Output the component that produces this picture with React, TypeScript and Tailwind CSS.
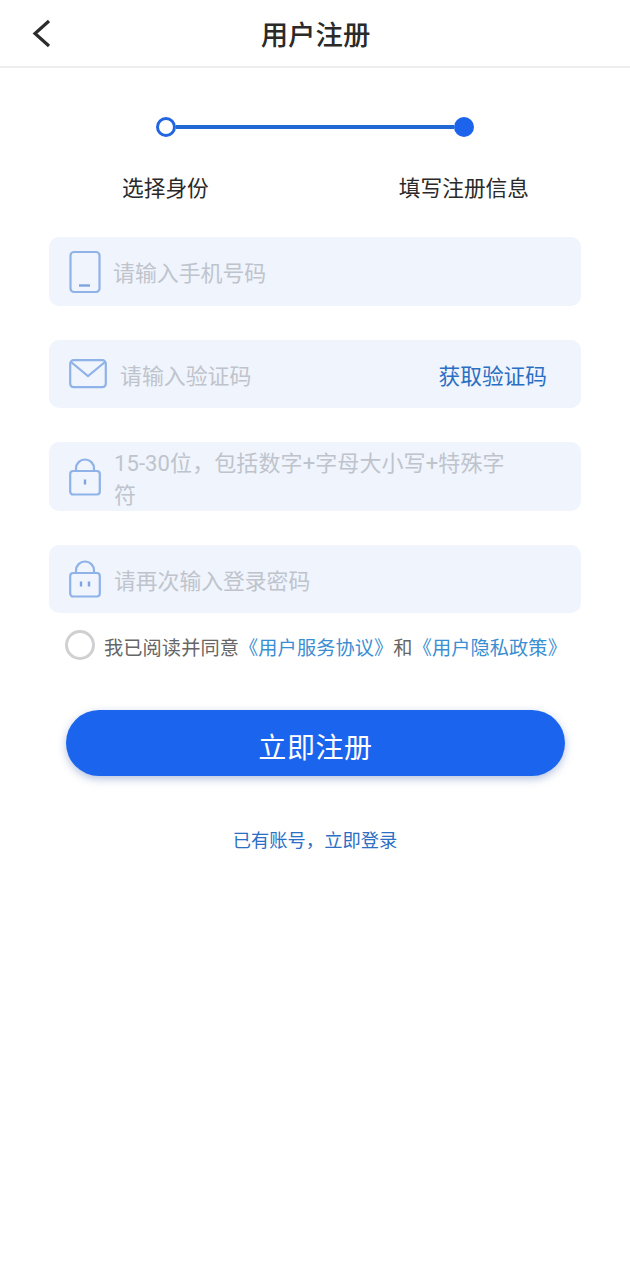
import React from 'react';

const cjk = "font-['Roboto','Noto_Sans_CJK_SC',sans-serif]";

const PhoneIcon = () => (
  <svg width="32" height="44" viewBox="0 0 32 44" fill="none" stroke="#8fb2e8" strokeWidth="2.2">
    <rect x="1.5" y="2" width="29" height="40" rx="3.5" />
    <path d="M10 35.5h11" stroke="#7fa5e0" strokeWidth="2.4" />
  </svg>
);

const MailIcon = () => (
  <svg width="38" height="30" viewBox="0 0 38 30" fill="none" stroke="#8fb2e8" strokeWidth="2.2">
    <rect x="1.2" y="1.2" width="35.6" height="27" rx="3.5" />
    <path d="M2 3l17 14L36 3" />
  </svg>
);

const LockIcon = ({ dots }: { dots: number }) => (
  <svg width="32" height="38" viewBox="0 0 32 38" fill="none" stroke="#8fb2e8" strokeWidth="2.2">
    <rect x="1.2" y="13" width="29.6" height="23.5" rx="3" />
    <path d="M7 13V10.5a9 9 0 0 1 18 0V13" />
    {dots === 1 ? (
      <path d="M16 21.5v5" strokeWidth="2.4" stroke="#7fa5e0" />
    ) : (
      <path d="M12 21.5v5M20 21.5v5" strokeWidth="2.4" stroke="#7fa5e0" />
    )}
  </svg>
);

const App = () => {
  return (
    <div className={`w-[630px] h-[1280px] bg-white overflow-hidden ${cjk}`}>
      {/* header */}
      <div className="relative h-[68px] border-b-2 border-[#eeeeee] flex items-center justify-center">
        <svg className="absolute left-[32px] top-[19px]" width="20" height="29" viewBox="0 0 20 29" fill="none" stroke="#2c2c2c" strokeWidth="3.2">
          <path d="M17 2L3 14.5 17 27" />
        </svg>
        <h1 className="pt-[7px] pl-[1px] text-[27.4px] leading-none font-medium text-[#2a2a2a]">用户注册</h1>
      </div>

      {/* steps */}
      <div className="flex items-center justify-center mt-[48px] h-[21px] pr-[1px]">
        <div className="w-[20px] h-[20px] rounded-full border-[3.5px] border-[#2165e0] bg-white" />
        <div className="w-[278px] h-[4px] bg-[#2068d4]" />
        <div className="w-[20px] h-[20px] rounded-full bg-[#1c64ec]" />
      </div>
      <div className="flex justify-between pl-[122px] pr-[101px] mt-[40px] text-[21.7px] leading-[24px] text-[#2a2a2a]">
        <span>选择身份</span>
        <span>填写注册信息</span>
      </div>

      {/* form */}
      <div className="flex flex-col gap-[34px] mx-[49px] mt-[36px]">
        <div className="h-[69px] rounded-[10px] bg-[#eff4fd] flex items-center pl-[20px] gap-[12px]">
          <PhoneIcon />
          <span className="text-[21.9px] mt-[6px] text-[#bfc4cc]">请输入手机号码</span>
        </div>
        <div className="h-[68px] rounded-[10px] bg-[#eff4fd] flex items-center pl-[20px] pr-[34px]">
          <MailIcon />
          <span className="text-[21.9px] text-[#bfc4cc] ml-[13px] mt-[7px]">请输入验证码</span>
          <span className="ml-auto mt-[6px] text-[21.7px] text-[#2b6fc4]">获取验证码</span>
        </div>
        <div className="h-[69px] rounded-[10px] bg-[#eff4fd] flex items-center pl-[20px] gap-[13px]">
          <LockIcon dots={1} />
          <p className="w-[400px] mt-[6px] text-[22px] leading-[32px] tracking-[0.1px] text-[#bfc4cc]">15-30位，包括数字+字母大小写+特殊字符</p>
        </div>
        <div className="h-[68px] rounded-[10px] bg-[#eff4fd] flex items-center pl-[20px] gap-[13px]">
          <LockIcon dots={2} />
          <span className="text-[21.8px] text-[#bfc4cc] mt-[6px]">请再次输入登录密码</span>
        </div>
      </div>

      {/* agreement */}
      <div className="flex items-center ml-[65px] mt-[17px] h-[30px] text-[19.2px] leading-[30px] tracking-[0.1px] whitespace-nowrap">
        <div className="w-[30px] h-[30px] rounded-full border-[3px] border-[#d0d0d3] bg-white mr-[9px]" />
        <div className="flex mt-[8px]">
          <span className="text-[#666666]">我已阅读并同意</span>
          <span className="text-[#3a8ed2]">《用户服务协议》</span>
          <span className="text-[#666666]">和</span>
          <span className="text-[#3a8ed2]">《用户隐私政策》</span>
        </div>
      </div>

      {/* submit */}
      <div className="mx-[66px] mt-[50px] w-[499px] h-[66px] rounded-full bg-[#1b65ee] shadow-[0_3px_8px_rgba(40,80,160,0.35)] flex items-center justify-center pt-[12px] text-[28px] tracking-[0.6px] text-white">
        立即注册
      </div>

      <p className="mt-[53px] text-center text-[18.3px] leading-[24px] text-[#2b6fc4]">已有账号，立即登录</p>
    </div>
  );
};

export default App;
